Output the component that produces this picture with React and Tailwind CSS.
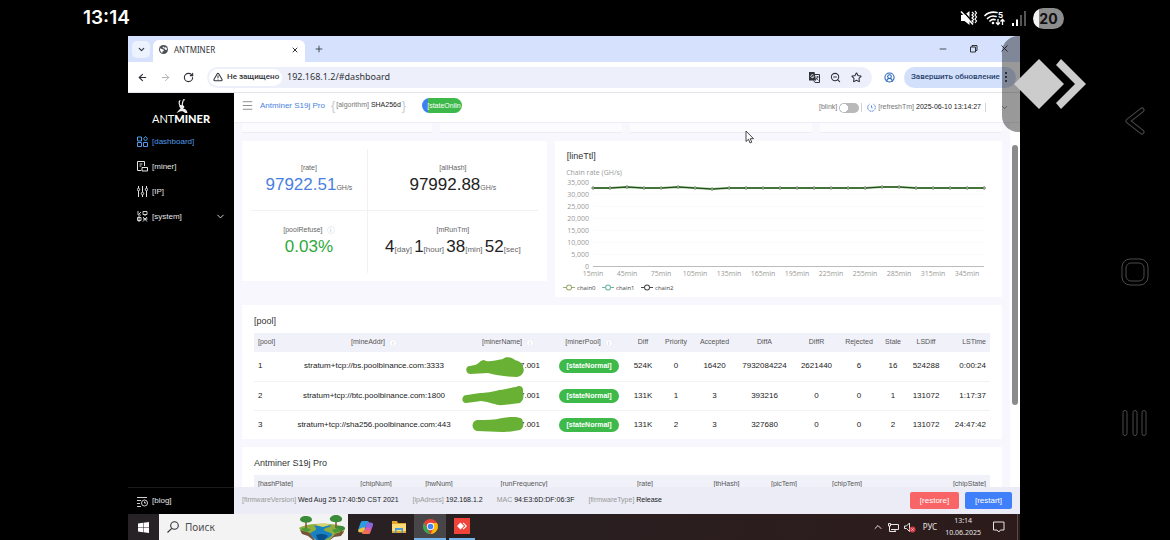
import {
  ArrowLeft,
  ArrowRight,
  ChevronDown,
  ChevronUp,
  CircleUserRound,
  Menu,
  Minus,
  Plus,
  RotateCw,
  Star,
  TriangleAlert,
  X,
  ZoomOut,
} from 'lucide-react';

const poolRows = [
  { id: 1, addr: 'stratum+tcp://bs.poolbinance.com:3333', name: '7.001', diff: '524K', priority: 0, accepted: 16420, diffA: 7932084224, diffR: 2621440, rejected: 6, stale: 16, lsDiff: 524288, lsTime: '0:00:24' },
  { id: 2, addr: 'stratum+tcp://btc.poolbinance.com:1800', name: '7.001', diff: '131K', priority: 1, accepted: 3, diffA: 393216, diffR: 0, rejected: 0, stale: 1, lsDiff: 131072, lsTime: '1:17:37' },
  { id: 3, addr: 'stratum+tcp://sha256.poolbinance.com:443', name: '7.001', diff: '131K', priority: 2, accepted: 3, diffA: 327680, diffR: 0, rejected: 0, stale: 2, lsDiff: 131072, lsTime: '24:47:42' },
];

// marker strokes drawn over the worker names, one per row
const scribbles = [
  'M8 10 C3 10 3 17 8 18 L26 17 C34 19 44 21 55 21 C61 20 63 15 61 11 C60 6 56 5 53 4 C50 1 43 0 41 3 C33 4 26 7 22 4 C18 4 17 8 13 9 Z',
  'M5 9 C-1 9 -1 17 4 17 C9 16 15 16 19 15 C29 16 35 20 41 19 L58 17 C63 13 61 9 61 6 C62 0 57 -1 54 1 C46 2 43 4 37 4 C31 6 23 7 18 7 Z',
  'M15 5 C9 6 9 15 15 16 L40 17 C48 17 52 16 58 15 C63 12 61 6 60 4 C56 1 47 2 40 3 C33 5 24 5 15 5 Z',
];

const poolCols = [36, 168, 100, 68, 34, 32, 45, 55, 49, 36, 32, 34, 47];
const hashCols = [91, 62, 64, 106, 136, 27, 88, 38, 124];
const hashHeads = ['[hashPlate]', '[chipNum]', '[hwNum]', '[runFrequency]', '[rate]', '[thHash]', '[picTem]', '[chipTem]', '[chipState]'];

const chartDots = [24, 24, 23, 24, 24, 23, 24, 25, 24, 24, 24, 24, 24, 24, 24, 24, 24, 23, 23, 24, 24, 24, 24, 24];
const yTicks = ['35,000', '30,000', '25,000', '20,000', '15,000', '10,000', '5,000', '0'];
const xTicks = [15, 45, 75, 105, 135, 165, 195, 225, 255, 285, 315, 345];

const InfoDot = () => (
  <span className="inline-flex size-2 shrink-0 items-center justify-center rounded-full border border-[#e9edf6] bg-white text-[6px] leading-none text-[#b4bccb]">
    i
  </span>
);

const StatusBar = () => (
  <header className="flex h-9 shrink-0 items-center justify-between pr-[106px] pl-[83px] font-['Inter',sans-serif] text-white">
    <span className="text-[19px] font-semibold">13:14</span>
    <div className="flex items-center gap-[6px]">
      <svg className="h-4 w-[18px]" viewBox="0 0 18 16" fill="none" stroke="white">
        <path d="M1 5h3.500l5-4v14l-5-4H1z" fill="white" stroke="none" />
        <path d="M2.500 .5l11 12.500" stroke="black" strokeWidth="1.500" />
        <path d="M1 1.500l12 13" strokeWidth="1.500" />
        <path d="M12 2l1.500 1.500L12 5l1.500 1.500L12 8l1.500 1.500L12 11l1.500 1.500M15 1l1.500 2-1.500 2 1.500 2-1.500 2 1.500 2-1.500 2" strokeWidth="1.200" />
      </svg>
      <svg className="h-4 w-[22px]" viewBox="0 0 22 16" fill="none" stroke="white" strokeWidth="1.700">
        <path d="M1 5.500C4 2.500 8 1.500 13 2.500M3.500 8.500C6 6 9 5.500 12 6.500M6 11c1.500-1.500 3-2 5-1.300" strokeLinecap="round" />
        <circle cx="9" cy="13" r="1.300" fill="white" stroke="none" />
        <path d="M14 9v5M12 12.500l2 2 2-2M18.500 15v-5M16.500 11.500l2-2 2 2" strokeWidth="1.300" />
        <text x="14" y="8" fill="white" stroke="none" fontSize="8" fontWeight="700">5</text>
      </svg>
      <svg className="h-4 w-[14px]" viewBox="0 0 14 16">
        <path d="M0 13h2v3H0zM4 9.500h2V16H4z" fill="white" />
        <path d="M8 5h2v11H8zM12 1h2v15h-2z" fill="#555" />
      </svg>
      <span className="ml-[1px] flex h-[21px] w-[31px] items-center justify-center rounded-full bg-linear-to-r from-[#f2f2f2] from-20% to-[#8d8d8d] to-20% text-[14px] font-bold text-[#111]">
        20
      </span>
    </div>
  </header>
);

const BrowserChrome = () => (
  <div className="shrink-0 font-['Noto_Sans',sans-serif] text-[8px] text-[#2f3238]">
    <div className="flex h-[26px] items-end bg-[#d5e1fd] pl-1">
      <button aria-label="Search tabs" className="mb-1 flex h-[17px] w-[18px] items-center justify-center rounded-[5px] bg-[#edf3fe]">
        <ChevronDown size={9} strokeWidth={3} />
      </button>
      <div className="ml-[3px] flex h-[22px] w-[152px] items-center rounded-t-md bg-white px-[6px] pb-[3px]">
        <svg className="size-[9px]" viewBox="0 0 10 10">
          <circle cx="5" cy="5" r="5" fill="#4d5156" />
          <path d="M1 4c2-.5 2 1 3.500 1s1 2-.5 2.200L3.500 9C2 8 1 6.500 1 4zM5 1c-.5 1.500 1 2 2 1.500S9 4 9 5 7 5.500 6.500 4.500 4 4 4 2.500z" fill="white" />
        </svg>
        <span className="ml-[6px] flex-1">ANTMINER</span>
        <button aria-label="Close tab"><X size={8} strokeWidth={3} /></button>
      </div>
      <button aria-label="New tab" className="mb-2 ml-[9px]"><Plus size={10} strokeWidth={2} /></button>
      <div className="mb-2 ml-auto flex items-center gap-[21px] pr-[10px]">
        <button aria-label="Minimize"><Minus size={10} strokeWidth={2} /></button>
        <button aria-label="Restore">
          <svg className="size-[9px]" viewBox="0 0 9 9" fill="none" stroke="currentColor">
            <path d="M1.500 3h5v5h-5zM3 3V1.500h5v5H6.500" />
          </svg>
        </button>
        <button aria-label="Close"><X size={11} strokeWidth={2} /></button>
      </div>
    </div>
    <div className="flex h-[31px] items-center border-b border-[#e3e5ea] bg-white pr-1 pl-[9px]">
      <button aria-label="Back"><ArrowLeft size={11} strokeWidth={2.500} /></button>
      <button aria-label="Forward" className="ml-3 text-[#a9abaf]"><ArrowRight size={11} strokeWidth={2} /></button>
      <button aria-label="Reload" className="ml-3"><RotateCw size={11} strokeWidth={2.500} /></button>
      <div className="ml-[13px] flex h-[21px] flex-1 items-center rounded-full bg-[#edf0fb] pr-[10px] pl-[2px]">
        <button className="flex h-[17px] w-[73px] shrink-0 items-center gap-1 rounded-full bg-white pl-1 font-['Roboto',sans-serif] text-[8px] font-medium whitespace-nowrap">
          <TriangleAlert className="shrink-0" size={10} strokeWidth={2.500} />
          Не защищено
        </button>
        <input aria-label="Address" className="ml-[5px] min-w-0 flex-1 bg-transparent text-[9px] outline-none" defaultValue="192.168.1.2/#dashboard" />
        <div className="flex items-center gap-[10px]">
          <svg className="size-[11px]" viewBox="0 0 11 11" fill="none" stroke="currentColor">
            <path d="M4 2.500h6.500v8H6l-1.500-2" />
            <path d="M0 0h5.500l1.500 8.500H0z" fill="currentColor" stroke="none" />
            <path d="M4.500 3.200a1.500 1.500 0 1 0 .3 1.500H3.500" stroke="white" strokeWidth=".8" />
            <path d="M6.500 5H10M8.500 4v1c0 1-1 2.500-2 3M7 6l2.500 2.500" strokeWidth=".7" />
          </svg>
          <ZoomOut size={11} strokeWidth={2.300} />
          <Star size={11} strokeWidth={2.300} />
        </div>
      </div>
      <button aria-label="Profile" className="mr-[9px] ml-3 text-[#2262b8]"><CircleUserRound size={11} strokeWidth={2.300} /></button>
      <button className="flex h-[21px] w-[112px] items-center justify-between rounded-full bg-[#d3e0fb] pr-[9px] pl-[7px] font-['Roboto',sans-serif] text-[8px] font-medium whitespace-nowrap text-[#26416d]">
        Завершить обновление
        <span className="flex flex-col gap-[2px]">
          <i className="size-[2px] rounded-full bg-[#15233d]" />
          <i className="size-[2px] rounded-full bg-[#15233d]" />
          <i className="size-[2px] rounded-full bg-[#15233d]" />
        </span>
      </button>
    </div>
  </div>
);

const Sidebar = () => (
  <aside className="flex w-[106px] shrink-0 flex-col bg-black text-[8px] text-[#e6e6e6]">
    <div className="flex flex-col items-center pt-[6px]">
      <svg className="h-[14px] w-4" viewBox="0 0 16 14" fill="none" stroke="#eee">
        <path d="M8 7C5.500 6 6 3 7 1.500M9.500 7c-1-2 .5-4 1-6.500" strokeWidth="1.200" />
        <path d="M7 1.500l-1 1M10.500 .5L12 1" />
        <path d="M6 7c2-1.500 4-1.500 5 0s-.5 2-1 2.500c3 .5 4 2 4.500 4.500H12c-1-1.500-3-2-5-1.500L3.500 14 6 11 7.500 9.500z" fill="#eee" stroke="none" />
      </svg>
      <div className="font-['Lato',sans-serif] text-[11px] leading-3 text-white">
        ANT<b className="font-black">MINER</b>
      </div>
    </div>
    <nav className="mt-1 flex flex-col">
      <a href="#dashboard" className="flex h-[25px] items-center gap-1 pl-[9px] text-[#4f9be8]">
        <svg className="size-[11px]" viewBox="0 0 11 11" fill="none" stroke="currentColor">
          <path d="M.500 1h4v4h-4zM.500 6.500h4v4h-4zM6.500 6.500h4v4h-4zM8.500.500l2 2.300-2 2.300-2-2.300z" />
        </svg>
        [dashboard]
      </a>
      <a href="#miner" className="flex h-[25px] items-center gap-1 pl-[9px]">
        <svg className="size-[11px]" viewBox="0 0 11 11" fill="none" stroke="currentColor">
          <path d="M4 9.500H.500V.500h7V5M2.500 3h3M2.500 5h2M5 6.500h5.500v3.500H5z" />
        </svg>
        [miner]
      </a>
      <a href="#ip" className="flex h-[25px] items-center gap-1 pl-[9px]">
        <svg className="size-[11px]" viewBox="0 0 11 11" fill="none" stroke="currentColor">
          <path d="M1.500 0v2M1.500 5v6M5.500 0v6M5.500 9v2M9.500 0v2M9.500 5v6" />
          <circle cx="1.500" cy="3.500" r="1.200" />
          <circle cx="5.500" cy="7.500" r="1.200" />
          <circle cx="9.500" cy="3.500" r="1.200" />
        </svg>
        [IP]
      </a>
      <a href="#system" className="flex h-[25px] items-center gap-1 pr-2 pl-[9px]">
        <svg className="size-[11px]" viewBox="0 0 11 11" fill="none" stroke="currentColor" strokeWidth=".9">
          <path d="M1 0v4h3M4 1L2 3M6 .500h4v3H6zM8 3.500V5M.500 6.500h3.500v3H.500zM2 5v6M6 6l4 4.500M10 6L6 10.500M6 8h4.500" />
        </svg>
        [system]
        <ChevronDown className="ml-auto" size={11} strokeWidth={2} />
      </a>
    </nav>
    <a href="#blog" className="mt-auto flex h-[27px] items-center gap-1 border-t border-[#1b1b1b] pl-[9px]">
      <svg className="size-[11px]" viewBox="0 0 11 11" fill="none" stroke="currentColor" strokeWidth=".9">
        <path d="M0 1.500h10M0 4.500h4M0 7.500h3M0 10.500h4" />
        <circle cx="7.500" cy="7" r="3" />
        <path d="M7.500 5.500V7H9" />
      </svg>
      [blog]
    </a>
  </aside>
);

const MinerHeader = () => (
  <div className="flex h-[30px] shrink-0 items-center justify-between border-b border-[#eceef5] bg-white pr-[11px] pl-[7px] text-[7px] text-[#777]">
    <div className="flex items-center pb-1">
      <button aria-label="Toggle menu"><Menu size={13} strokeWidth={1.500} /></button>
      <h1 className="ml-[6px] text-[8px] text-[#4a82e0]">Antminer S19j Pro</h1>
      <span className="ml-[6px] text-[13px] leading-3 text-[#ccc]">{'{'}</span>
      <span className="mx-[1px]">
        [algorithm] <span className="text-[#222]">SHA256d</span>
      </span>
      <span className="text-[13px] leading-3 text-[#ccc]">{'}'}</span>
      <div className="ml-4 flex h-[15px] w-10 rounded-full bg-linear-to-r from-[#3f80f0] from-15% to-[#3db84a] to-15% pl-[5px] text-[7px] leading-[15px] font-medium whitespace-nowrap text-white">
        [stateOnlin
      </div>
    </div>
    <div className="flex items-center">
      <label htmlFor="blink">[blink]</label>
      <input
        id="blink"
        type="checkbox"
        className="ml-[2px] h-[10px] w-5 appearance-none rounded-full bg-[#b9b9b9] bg-[radial-gradient(circle_at_5px_50%,white_4px,transparent_4px)]"
      />
      <span className="ml-[2px] h-[9px] w-px bg-[#d2d2d2]" />
      <svg className="mr-[2px] ml-[5px] size-[9px]" viewBox="0 0 9 9" fill="none" stroke="#4b82d8">
        <path d="M6.500 1.200a3.800 3.800 0 1 1-4 0M4.500 2.500V5H6" strokeDasharray="1.500 .5" />
      </svg>
      <span>
        [refreshTm] <span className="text-[#222]">2025-06-10 13:14:27</span>
      </span>
      <span className="ml-1 h-[9px] w-px bg-[#d2d2d2]" />
      <button aria-label="More" className="ml-[14px]"><ChevronDown size={9} /></button>
    </div>
  </div>
);

const StatCards = () => (
  <section className="grid h-[140px] grid-cols-[11fr_16fr] grid-rows-2 bg-white py-2 pr-[9px] pl-[9px] text-center text-[7px] text-[#666]">
    <div className="border-r border-b border-[#f0f1f5] pt-[14px]">
      <p className="leading-[10px]">[rate]</p>
      <p className="leading-6"><span className="text-[17px] text-[#4a7fe0]">97922.51</span>GH/s</p>
    </div>
    <div className="border-b border-[#f0f1f5] pt-[14px]">
      <p className="leading-[10px]">[allHash]</p>
      <p className="leading-6"><span className="text-[17px] text-[#222]">97992.88</span>GH/s</p>
    </div>
    <div className="border-r border-[#f0f1f5] pt-[14px]">
      <p className="flex items-center justify-center gap-1 leading-[10px]">[poolRefuse] <InfoDot /></p>
      <p className="text-[17px] leading-6 text-[#2fa83a]">0.03%</p>
    </div>
    <div className="pt-[14px]">
      <p className="leading-[10px]">[mRunTm]</p>
      <p className="text-[8px] leading-6 whitespace-nowrap">
        <span className="text-[17px] text-[#222]">4</span>[day]{' '}
        <span className="text-[17px] text-[#222]">1</span>[hour]{' '}
        <span className="text-[17px] text-[#222]">38</span>[min]{' '}
        <span className="text-[17px] text-[#222]">52</span>[sec]
      </p>
    </div>
  </section>
);

const RateChart = () => {
  const line = chartDots.map((y, i) => `${38 + i * 17},${y}`).join(' ');

  return (
    <section className="bg-white">
      <h2 className="pt-[7px] pl-3 text-[9px] leading-4 text-[#333]">[lineTtl]</h2>
      <svg className="w-full font-['Open_Sans',sans-serif] text-[7px]" viewBox="0 0 447 133" fill="#999">
        <text x="39" y="11" textAnchor="middle">Chain rate (GH/s)</text>
        {yTicks.map((tick, i) => (
          <g key={tick}>
            <line x1="38" x2="429" y1={18.5 + i * 12} y2={18.5 + i * 12} stroke={tick === '0' ? '#bbb' : '#f9fafb'} />
            <text x="34" y={21 + i * 12} textAnchor="end">{tick}</text>
          </g>
        ))}
        {xTicks.map((tick, i) => (
          <text key={tick} x={38 + i * 34} y="112" textAnchor="middle">{tick}min</text>
        ))}
        <polyline points={line} fill="none" stroke="#63a556" strokeWidth="2" />
        <polyline points={line} fill="none" stroke="#24441f" strokeWidth="1.200" />
        {chartDots.map((y, i) => (
          <circle key={i} cx={38 + i * 17} cy={y} r="1.200" fill="#dfe8da" stroke="#2e4a28" strokeWidth=".7" />
        ))}
        {[['chain0', '#97a96b'], ['chain1', '#67b5a5'], ['chain2', '#444']].map(([name, color], i) => (
          <g key={name} stroke={color} fill="white">
            <path d={`M${8 + i * 39} 123.500h12`} />
            <circle cx={14 + i * 39} cy="123.500" r="2.500" />
            <text x={22 + i * 39} y="126" fill="#444" stroke="none" className="text-[6px]">{name}</text>
          </g>
        ))}
      </svg>
    </section>
  );
};

const PoolTable = () => (
  <section className="bg-white px-3">
    <h2 className="pt-2 pb-1 text-[9px] leading-4 text-[#333]">[pool]</h2>
    <table className="w-full table-fixed text-center text-[8px] whitespace-nowrap text-[#222]">
      <colgroup>
        {poolCols.map((w, i) => <col key={i} style={{ width: w }} />)}
      </colgroup>
      <thead>
        <tr className="h-[19px] bg-[#f1f1fa] text-[7px] text-[#555] [&>th]:font-normal">
          <th className="pl-1 text-left">[pool]</th>
          <th><span className="inline-flex items-center gap-1">[mineAddr] <InfoDot /></span></th>
          <th><span className="inline-flex items-center gap-1">[minerName] <InfoDot /></span></th>
          <th className="pr-[6px]"><span className="inline-flex items-center gap-1">[minerPool] <InfoDot /></span></th>
          <th>Diff</th>
          <th>Priority</th>
          <th>Accepted</th>
          <th>DiffA</th>
          <th>DiffR</th>
          <th>Rejected</th>
          <th>Stale</th>
          <th>LSDiff</th>
          <th className="pr-1 text-right">LSTime</th>
        </tr>
      </thead>
      <tbody>
        {poolRows.map((row, i) => (
          <tr key={row.id} className="h-[29px] border-b border-[#f2f3f7] last:border-0">
            <td className="pl-1 text-left">{row.id}</td>
            <td>{row.addr}</td>
            <td>
              <div className="flex items-center justify-end pr-[18px]">
                <svg className="relative z-10 -mr-[6px] h-[22px] w-16 shrink-0" viewBox="0 -1 64 22">
                  <path d={scribbles[i]} fill="#68b134" />
                </svg>
                {row.name}
              </div>
            </td>
            <td className="pr-[6px]">
              <span className="inline-block h-[14px] w-[60px] rounded-full bg-[#3dba49] text-[7px] leading-[14px] font-bold text-white">
                [stateNormal]
              </span>
            </td>
            <td>{row.diff}</td>
            <td>{row.priority}</td>
            <td>{row.accepted}</td>
            <td>{row.diffA}</td>
            <td>{row.diffR}</td>
            <td>{row.rejected}</td>
            <td>{row.stale}</td>
            <td>{row.lsDiff}</td>
            <td className="pr-1 text-right">{row.lsTime}</td>
          </tr>
        ))}
      </tbody>
    </table>
  </section>
);

const HashTable = () => (
  <section className="bg-white px-3">
    <h2 className="pt-2 pb-1 text-[9px] leading-4 text-[#333]">Antminer S19j Pro</h2>
    <table className="w-full table-fixed text-center text-[7px] whitespace-nowrap text-[#555]">
      <colgroup>
        {hashCols.map((w, i) => <col key={i} style={{ width: w }} />)}
      </colgroup>
      <thead>
        <tr className="h-[19px] bg-[#f1f1fa] [&>th]:font-normal">
          {hashHeads.map((head) => (
            <th key={head} className="p-0 first:pl-1 first:text-left last:pr-1 last:text-right">{head}</th>
          ))}
        </tr>
      </thead>
    </table>
  </section>
);

const MinerFooter = () => (
  <footer className="flex h-[27px] shrink-0 items-center gap-[14px] bg-[#ebecf6] px-2 text-[7px] whitespace-nowrap text-[#222] [&_span]:text-[#999]">
    <p><span>[firmwareVersion]</span> Wed Aug 25 17:40:50 CST 2021</p>
    <p><span>[ipAdress]</span> 192.168.1.2</p>
    <p><span>MAC</span> 94:E3:6D:DF:06:3F</p>
    <p><span>[firmwareType]</span> Release</p>
    <div className="ml-auto flex gap-[6px] text-[8px] text-white">
      <button className="h-[17px] w-[49px] rounded-[2px] bg-[#f96567]">[restore]</button>
      <button className="h-[17px] w-[47px] rounded-[2px] bg-[#3f80fa]">[restart]</button>
    </div>
  </footer>
);

const Taskbar = () => (
  <div className="flex h-[26px] shrink-0 items-center bg-linear-to-r from-[#262225] to-[#2d1b1b] font-['Noto_Sans',sans-serif] text-[#e8e4e4]">
    <button aria-label="Start" className="flex w-[31px] justify-center">
      <svg className="size-[11px]" viewBox="0 0 11 11" fill="white">
        <path d="M0 1.500L5 .8v4.400H0zM5.500.7L11 0v5.200H5.500zM0 5.800h5v4.400L0 9.500zM5.500 5.800H11V11l-5.500-.7z" />
      </svg>
    </button>
    <div className="flex h-full w-[189px] items-center bg-[#f4f3f3] pr-[2px] pl-2">
      <svg className="size-3 shrink-0" viewBox="0 0 12 12" fill="none" stroke="#333" strokeWidth="1.100">
        <circle cx="7.500" cy="4.500" r="3.800" />
        <path d="M4.800 7.300L.500 11.500" />
      </svg>
      <input aria-label="Search" placeholder="Поиск" className="ml-[6px] min-w-0 flex-1 bg-transparent text-[10px] outline-none placeholder:text-[#4c4c4c]" />
      <svg className="h-[26px] w-12 shrink-0" viewBox="0 0 48 26">
        <path d="M1 14C8 9 38 8 47 14l-2 6-9 1-5 5H18l-4-5-9-1z" fill="#8fae3e" />
        <path d="M2 16l10 3 5 7h14l6-6 9-3-3 5-7 1-4 3H15l-5-4-6-2z" fill="#76543a" />
        <path d="M16 12c6-2 14-2 17 0-3 2-8 2-7 4s9 2 8 5c-2 3-5 3-7 5h-9c-3-3-8-6-4-8s6-3 2-6z" fill="#1781c2" />
        <path d="M18 21c4-2 9-1 12 1l-4 4h-6z" fill="#0b4e8c" />
        <path d="M17 11c5-2 12-2 15 0l-7 2z" fill="#d8d36a" />
        <path d="M8 7v8M38 6v8M43 14v6" stroke="#7a5433" strokeWidth="1.500" />
        <path d="M2 6c0-3 3-4 5-4s7 0 7 4c0 3-10 4-12 0zM32 6c-1-3 3-5 6-5s7 2 6 5-10 3-12 0zM38 14c0-3 8-3 9 0s-8 3-9 0z" fill="#3c8b3b" />
        <path d="M3 15c3-2 8-1 10 1l-5 2zM34 16l6-2 3 3-6 2z" fill="#4a9a3a" />
      </svg>
    </div>
    <button aria-label="Copilot" className="flex w-[35px] justify-center">
      <svg className="size-[15px]" viewBox="0 0 16 16">
        <path d="M5 1h5c1 0 1.500 1 2 2L9 5 7 11c-.5 2-1 2-3 2H2C0 13 0 11 .5 9.500l2-6C3 2 3.500 1 5 1z" fill="#2d9be0" />
        <path d="M.500 10l4-2h3L7 11c-.5 2-1 2-3 2H2C.500 13 0 12 .500 10z" fill="#f0c23b" />
        <path d="M11 15H6c-1 0-1.500-1-2-2l3-2 2-6c.5-2 1-2 3-2h2c2 0 2 2 1.500 3.500l-2 6C13 14 12.500 15 11 15z" fill="#d65bb5" />
        <path d="M9 5c.5-2 1-2 3-2h2c2 0 2 2 1.500 3.500L15 8H8z" fill="#8568e0" />
        <path d="M6 15c-1 0-1.500-1-2-2l3-2h6l-.5 2c-.5 1-.5 2-1.500 2z" fill="#f2704d" />
      </svg>
    </button>
    <button aria-label="Explorer" className="flex w-[31px] justify-center">
      <svg className="h-3 w-[14px]" viewBox="0 0 14 12">
        <path d="M0 0h5l1 2h8v10H0z" fill="#e5a62e" />
        <path d="M0 3h14v7H0z" fill="#fbdc75" />
        <path d="M3 7h8v5H9.500V9h-5v3H3z" fill="#4b9edb" />
      </svg>
    </button>
    <button aria-label="Chrome" className="flex h-full w-8 items-center justify-center border-b-2 border-[#76b4ea] bg-[#494649]">
      <svg className="size-[15px]" viewBox="0 0 16 16">
        <circle cx="8" cy="8" r="8" fill="#e84335" />
        <path d="M1.100 4L4.600 10 8 16A8 8 0 0 1 1.100 4z" fill="#34a853" />
        <path d="M8 16l3.500-6L8 4.300h7A8 8 0 0 1 8 16z" fill="#fbbc04" />
        <circle cx="8" cy="8" r="3.900" fill="white" />
        <circle cx="8" cy="8" r="3" fill="#4285f4" />
      </svg>
    </button>
    <button aria-label="AnyDesk" className="ml-[3px] flex h-full w-[26px] items-center justify-center border-b-2 border-[#76b4ea]">
      <svg className="size-4" viewBox="0 0 16 16">
        <path d="M0 0h16v16H0z" fill="#ee443a" />
        <path d="M6.500 4.500L10 8l-3.500 3.500L3 8zM9.500 4.500l3.500 3.500-3.500 3.500-.8-.8L11.400 8 8.700 5.300z" fill="white" />
      </svg>
    </button>
    <div className="ml-auto flex items-center pr-[2px] text-[7px]">
      <ChevronUp size={12} strokeWidth={2} />
      <svg className="ml-1 size-[11px]" viewBox="0 0 11 11" fill="none" stroke="currentColor">
        <path d="M3 2.500h7.500v5H3M1.500 4v5.500H8M7 7.500v2M.500 1.500h2v2.500h-2z" />
      </svg>
      <svg className="ml-[5px] h-[11px] w-3" viewBox="0 0 12 11" fill="none" stroke="currentColor">
        <path d="M.500 4h2l3-3v8.500l-3-3h-2z" />
        <circle cx="8.500" cy="7.500" r="3" fill="#d93a45" stroke="none" />
        <path d="M7.500 6.500l2 2M9.500 6.500l-2 2" strokeWidth=".8" />
      </svg>
      <span className="ml-[7px] text-[8px]">РУС</span>
      <time className="ml-2 text-center leading-[12px]">13:14<br />10.06.2025</time>
      <button aria-label="Notifications" className="ml-3">
        <svg className="size-3" viewBox="0 0 12 12" fill="none" stroke="currentColor">
          <path d="M.500 1h10.500v8H7.500L5.800 11 4 9H.500z" />
        </svg>
      </button>
      <span className="ml-3 h-[26px] w-px bg-[#5a4c4c]" />
    </div>
  </div>
);

const PhoneNav = () => (
  <nav className="flex w-[150px] shrink-0 flex-col items-end justify-between pt-[71px] pr-[21px] pb-[103px]">
    <button aria-label="Back">
      <svg className="size-7" viewBox="0 0 28 28" fill="none" strokeLinecap="round" strokeLinejoin="round">
        <path d="M21 3L7 14l14 11" stroke="#4a4a4a" strokeWidth="5" />
        <path d="M21 3L7 14l14 11" stroke="black" strokeWidth="3" />
      </svg>
    </button>
    <button aria-label="Home">
      <svg className="size-7" viewBox="0 0 28 28" fill="none" stroke="#4a4a4a">
        <rect x="1" y="1" width="26" height="26" rx="8" />
        <rect x="5" y="5" width="18" height="18" rx="5" />
      </svg>
    </button>
    <button aria-label="Recents">
      <svg className="size-7" viewBox="0 0 28 28" fill="none" stroke="#4a4a4a">
        <rect x="2" y="1.500" width="4" height="25" rx="2" />
        <rect x="12" y="1.500" width="4" height="25" rx="2" />
        <rect x="21" y="1.500" width="4" height="25" rx="2" />
      </svg>
    </button>
  </nav>
);

const App = () => {
  return (
    <div className="flex h-screen flex-col overflow-hidden bg-black font-['Liberation_Sans',Arial,sans-serif]">
      <StatusBar />
      <div className="flex min-h-0 flex-1 pl-32">
        <div className="relative flex min-w-0 flex-1 flex-col">
          <BrowserChrome />
          <div className="flex min-h-0 flex-1">
            <Sidebar />
            <main className="flex min-w-0 flex-1 flex-col">
              <MinerHeader />
              <div className="flex min-h-0 flex-1 bg-white">
                <div className="flex min-w-0 flex-1 flex-col gap-2 overflow-hidden bg-[#f7f7fd] px-2">
                  <div className="grid shrink-0 grid-cols-[25fr_24fr_24fr_24fr] gap-2">
                    <div className="h-[10px] border-b border-[#eceef7] bg-[#fcfcff]" />
                    <div className="h-[10px] border-b border-[#eceef7] bg-[#fcfcff]" />
                    <div className="h-[10px] border-b border-[#eceef7] bg-[#fcfcff]" />
                    <div className="h-[10px] border-b border-[#eceef7] bg-[#fcfcff]" />
                  </div>
                  <div className="grid shrink-0 grid-cols-[15fr_22fr] items-start gap-2">
                    <StatCards />
                    <RateChart />
                  </div>
                  <PoolTable />
                  <HashTable />
                </div>
                <div className="w-[10px] shrink-0 pt-[22px] pr-[2px] pl-[2px]">
                  <div className="h-[76%] w-[6px] rounded-full bg-[#8b8b8b]" />
                </div>
              </div>
              <MinerFooter />
            </main>
          </div>
          <Taskbar />

          {/* remote session handle */}
          <div className="absolute top-0 right-0 h-24 w-[18px] rounded-l-2xl bg-black/40" />
          <svg className="absolute top-[22px] -right-[66px] h-[52px] w-[74px]" viewBox="0 0 74 52" fill="#ccc">
            <path d="M27 1l25 25-25 25L2 26zM49 1l25 25-25 25-5-6 19-19L44 7z" />
          </svg>

          {/* mouse pointer */}
          <svg className="absolute top-[94px] left-[617px] h-[14px] w-[9px]" viewBox="0 0 9 14" fill="white" stroke="#333" strokeWidth=".9">
            <path d="M1 1v10.500l2.500-2.300L5 13l1.800-.8-1.600-3.500h3.300z" />
          </svg>
        </div>
        <PhoneNav />
      </div>
    </div>
  );
};

export default App;
